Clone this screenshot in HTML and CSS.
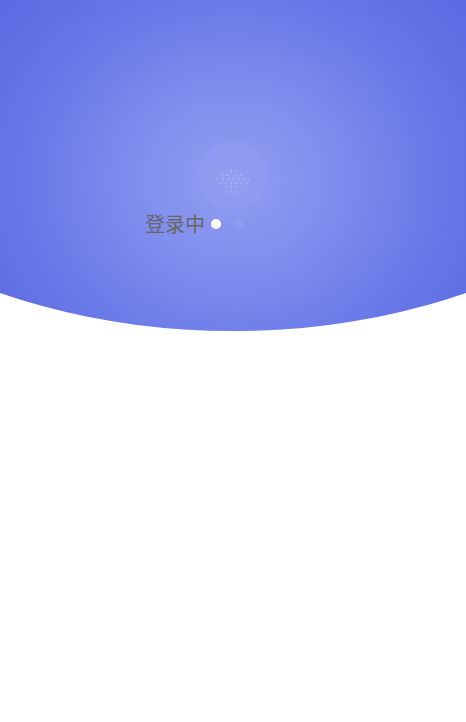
FILE: index.html
```html
<!DOCTYPE html>
<html lang="zh-CN">

<head>
    <meta charset="UTF-8">
    <meta name="viewport" content="width=device-width, initial-scale=1.0">
    <title>登录中</title>
    <link rel="stylesheet" href="styles.css">
</head>

<body>
    <div class="hero">
        <div class="avatar">
            <svg class="dots" width="40" height="26" viewBox="0 0 40 26">
                <g fill="#fff" fill-opacity="0.4">
                    <circle cx="18" cy="2" r="0.7"/>
                    <circle cx="23" cy="2" r="0.7"/>
                    <circle cx="9" cy="6" r="0.7"/>
                    <circle cx="14" cy="6" r="0.7"/>
                    <circle cx="23" cy="6" r="0.7"/>
                    <circle cx="28" cy="6" r="0.7"/>
                    <circle cx="4" cy="10" r="0.7"/>
                    <circle cx="10" cy="10" r="0.7"/>
                    <circle cx="16" cy="10" r="0.7"/>
                    <circle cx="21" cy="10" r="0.7"/>
                    <circle cx="26" cy="10" r="0.7"/>
                    <circle cx="31" cy="10" r="0.7"/>
                    <circle cx="36" cy="10" r="0.7"/>
                    <circle cx="8" cy="14" r="0.7"/>
                    <circle cx="13" cy="14" r="0.7"/>
                    <circle cx="18" cy="14" r="0.7"/>
                    <circle cx="23" cy="14" r="0.7"/>
                    <circle cx="29" cy="14" r="0.7"/>
                    <circle cx="34" cy="14" r="0.7"/>
                    <circle cx="13" cy="18" r="0.7"/>
                    <circle cx="18" cy="18" r="0.7"/>
                    <circle cx="24" cy="18" r="0.7"/>
                    <circle cx="18" cy="23" r="0.7"/>
                    <circle cx="23" cy="23" r="0.7"/>
                </g>
            </svg>
        </div>
        <div class="loading">
            <span class="loadingText">登录中</span>
            <span class="dot active"></span>
            <span class="dot"></span>
        </div>
    </div>
</body>

</html>
```

FILE: styles.css
```css
* {
    padding: 0;
    margin: 0;
    box-sizing: border-box;
}

body {
    width: 466px;
    height: 722px;
    background-color: #fff;
    font-family: "Noto Sans CJK SC", "Noto Sans", sans-serif;
    overflow: hidden;
}

.hero {
    height: 331px;
    background: radial-gradient(ellipse 320px 290px at 233px 180px, #929ef1 0%, #7d8bed 35%, #6878e7 65%, #5868e2 100%);
    clip-path: ellipse(501px 331px at 50% 0);
    display: flex;
    flex-direction: column;
    align-items: center;
    padding-top: 141px;
}

.avatar {
    width: 68px;
    height: 68px;
    border-radius: 50%;
    border: 2px solid rgba(255, 255, 255, 0.025);
    background-color: rgba(255, 255, 255, 0.02);
    display: flex;
    align-items: center;
    justify-content: center;
    padding-top: 14px;
}

.loading {
    align-self: flex-start;
    display: flex;
    align-items: center;
    padding-left: 145px;
    margin-top: 2px;
    height: 26px;
}

.loadingText {
    font-size: 20px;
    line-height: 26px;
    color: #666;
}

.dot {
    width: 10px;
    height: 10px;
    border-radius: 50%;
    margin-left: 6px;
    background-color: rgba(255, 255, 255, 0.06);
}

.dot.active {
    background-color: #fff;
    margin-right: 6px;
    margin-left: 6px;
}
```
